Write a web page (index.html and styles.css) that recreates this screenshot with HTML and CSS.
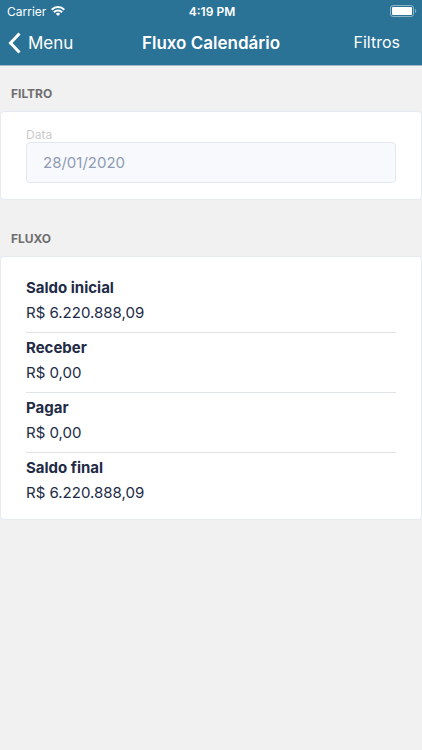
FILE: index.html
```html
<!DOCTYPE html>
<html lang="pt-BR">
<head>
<meta charset="utf-8">
<meta name="viewport" content="width=device-width, initial-scale=1">
<title>Fluxo Calendário</title>
<link rel="stylesheet" href="styles.css">
</head>
<body>
<header class="header">
  <div class="status">
    <div class="status-side">
      <span>Carrier</span>
      <svg class="wifi" viewBox="0 0 14 10" width="14" height="10" fill="none" stroke="#fff" stroke-width="2" aria-hidden="true">
        <path d="M.7 3.7a8.9 8.9 0 0 1 12.6 0"/>
        <path d="M2.9 6.2a5.8 5.8 0 0 1 8.2 0"/>
        <path d="M7 10 4.8 7.8a3.1 3.1 0 0 1 4.4 0z" fill="#fff" stroke="none"/>
      </svg>
    </div>
    <span class="time">4:19 PM</span>
    <div class="status-side status-end">
      <svg class="battery" viewBox="0 0 27 12" width="27" height="12" aria-hidden="true">
        <rect x=".5" y=".5" width="23" height="11" rx="2.5" fill="none" stroke="#8db3c7"/>
        <rect x="2" y="2" width="20" height="8" rx="1" fill="#fff"/>
        <path d="M25 4a2.2 2.2 0 0 1 0 4z" fill="#8db3c7"/>
      </svg>
    </div>
  </div>
  <nav class="nav">
    <button class="nav-button back" type="button">
      <svg viewBox="0 0 13 22" width="13" height="22" fill="none" stroke="#fff" stroke-width="3" aria-hidden="true"><path d="M11.5 1.5 2.5 11l9 9.5"/></svg>
      Menu
    </button>
    <h1 class="title">Fluxo Calendário</h1>
    <button class="nav-button filters" type="button">Filtros</button>
  </nav>
</header>
<main>
  <section>
    <h2 class="section-title">FILTRO</h2>
    <div class="card filter-card">
      <label class="field-label" for="date">Data</label>
      <input class="field" id="date" type="text" value="28/01/2020">
    </div>
  </section>
  <section>
    <h2 class="section-title">FLUXO</h2>
    <dl class="card flow-card">
      <div class="row"><dt>Saldo inicial</dt><dd>R$ 6.220.888,09</dd></div>
      <div class="row"><dt>Receber</dt><dd>R$ 0,00</dd></div>
      <div class="row"><dt>Pagar</dt><dd>R$ 0,00</dd></div>
      <div class="row"><dt>Saldo final</dt><dd>R$ 6.220.888,09</dd></div>
    </dl>
  </section>
</main>
</body>
</html>
```
FILE: styles.css
```css
* {
  box-sizing: border-box;
}

body {
  margin: 0;
  background: #f1f1f1;
  color: #222b45;
  font-family: Inter, "Liberation Sans", sans-serif;
  font-size: 15px;
}

.header {
  background: #2a7396;
  border-bottom: 1px solid #a3b8c6;
  color: #fff;
}

.status {
  display: grid;
  grid-template-columns: 1fr auto 1fr;
  align-items: center;
  height: 22px;
  padding: 0 5px 0 7px;
  font-size: 12px;
}

.status-side {
  display: flex;
  align-items: center;
  gap: 5px;
}

.status-end {
  justify-content: flex-end;
}

.time {
  font-weight: 600;
}

.nav {
  display: grid;
  grid-template-columns: 1fr auto 1fr;
  align-items: center;
  height: 43px;
  padding: 0 8px 1px;
}

.nav-button {
  display: flex;
  align-items: center;
  padding: 0;
  border: 0;
  background: none;
  color: inherit;
  font: inherit;
  cursor: pointer;
}

.back {
  justify-self: start;
  gap: 7px;
  font-size: 17px;
}

.filters {
  justify-self: end;
  padding: 0 14px 3px;
  font-size: 16px;
}

.title {
  margin: 0;
  font-size: 17px;
  font-weight: 600;
}

.section-title {
  margin: 0;
  padding: 18px 11px 8px;
  color: #6f6f6f;
  font-size: 12px;
  font-weight: 700;
  line-height: 19px;
}

.card {
  margin: 0 0 11px;
  border: 1px solid #e8eaf2;
  border-radius: 4px;
  background: #fff;
}

.filter-card {
  padding: 16px 25px;
}

.field-label {
  display: block;
  color: #cbcbcb;
  font-size: 12px;
  line-height: 14px;
}

.field {
  display: block;
  width: 100%;
  height: 41px;
  padding: 0 16px;
  border: 1px solid #e4e7f1;
  border-radius: 4px;
  background: #f7f9fc;
  color: #8f9bb3;
  font: inherit;
}

.flow-card {
  padding: 16px 25px 6px;
}

.row {
  display: grid;
  gap: 1px;
  padding: 3px 0 7px;
  border-bottom: 1px solid #dfe2e6;
  line-height: 24px;
}

.row:last-child {
  padding-bottom: 8px;
  border-bottom: 0;
}

.row dt {
  font-weight: 700;
}

.row dd {
  margin: 0;
}
```
